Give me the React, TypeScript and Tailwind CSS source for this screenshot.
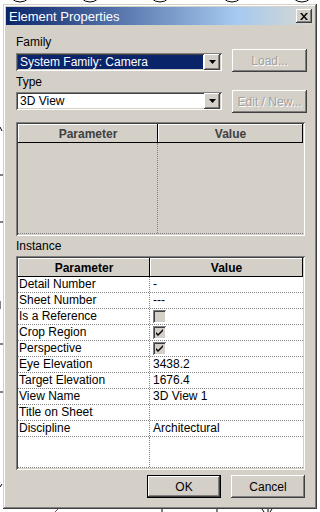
import React from 'react';

const sunken = 'shadow-[inset_1px_1px_#808080,inset_-1px_-1px_#ffffff,inset_2px_2px_#404040,inset_-2px_-2px_#d4d0c8]';
const raised = 'shadow-[inset_-1px_-1px_#404040,inset_1px_1px_#ffffff,inset_-2px_-2px_#808080]';

function DropArrow() {
  return (
    <div className={`w-[16px] h-[16px] bg-[#d4d0c8] flex items-center justify-center ${raised}`}>
      <svg width="7" height="4" viewBox="0 0 7 4">
        <path d="M0 0h7L3.5 4z" fill="#000" />
      </svg>
    </div>
  );
}

function Button({ label, disabled, def }: { label: string; disabled?: boolean; def?: boolean }) {
  return (
    <div className={`h-[23px] flex items-center justify-center bg-[#d4d0c8] text-[12px] ${def ? 'border border-black' : ''} ${raised}`}>
      <span className={disabled ? 'text-[#a0a0a0] [text-shadow:1px_1px_#ffffff]' : 'text-black'}>{label}</span>
    </div>
  );
}

function CheckBox({ checked }: { checked?: boolean }) {
  return (
    <div className={`w-[13px] h-[13px] bg-[#d4d0c8] flex items-center justify-center ${sunken}`}>
      {checked && (
        <svg width="9" height="9" viewBox="0 0 9 9">
          <path d="M1 4l2 2 5-5v2l-5 5-2-2z" fill="#000" />
        </svg>
      )}
    </div>
  );
}

const rows: { name: string; value: React.ReactNode }[] = [
  { name: 'Detail Number', value: '-' },
  { name: 'Sheet Number', value: '---' },
  { name: 'Is a Reference', value: <CheckBox /> },
  { name: 'Crop Region', value: <CheckBox checked /> },
  { name: 'Perspective', value: <CheckBox checked /> },
  { name: 'Eye Elevation', value: '3438.2' },
  { name: 'Target Elevation', value: '1676.4' },
  { name: 'View Name', value: '3D View 1' },
  { name: 'Title on Sheet', value: '' },
  { name: 'Discipline', value: 'Architectural' },
];

function HeaderCell({ label, w, dark }: { label: string; w: string; dark?: boolean }) {
  return (
    <div className={`${w} h-[19px] flex items-center justify-center bg-[#d4d0c8] font-bold text-[12px] ${dark ? 'text-[#404040]' : 'text-black'} shadow-[inset_-1px_-1px_#000000,inset_1px_1px_#ffffff]`}>
      {label}
    </div>
  );
}

export default function App() {
  return (
    <div className="relative w-[320px] h-[512px] bg-white overflow-hidden font-['Liberation_Sans',Arial,sans-serif]">
      <svg className="absolute inset-0" width="320" height="512" viewBox="0 0 320 512">
        <g fill="none" stroke="#000" strokeWidth="1">
          <circle cx="20" cy="-10" r="12" />
          <circle cx="90" cy="-10" r="12" />
          <circle cx="160" cy="-10" r="12" />
          <circle cx="232" cy="-10" r="12" />
          <circle cx="302" cy="-10" r="12" />
          <path d="M0 127l2 4M0 175h3M0 222h3M0 301v8M0 344h3M0 392h3M0 487l2-3M162 508v4M217 508v4M262 509l2 3M268 509v3M272 509l-2 3" />
        </g>
        <path d="M55 512l4-4" stroke="#c03050" />
      </svg>

      <div className={`absolute left-[3px] top-[4px] w-[314px] h-[505px] bg-[#d4d0c8] p-[3px] flex flex-col shadow-[inset_-1px_-1px_#404040,inset_1px_1px_#d4d0c8,inset_-2px_-2px_#808080,inset_2px_2px_#ffffff]`}>
        {/* title bar */}
        <div className="h-[18px] flex items-center pl-[3px] pr-[2px] bg-[linear-gradient(90deg,#0a246a,#a6caf0_75%,#d8d8d0)]">
          <span className="flex-1 text-white text-[13px] leading-none">Element Properties</span>
          <div className={`w-[16px] h-[14px] bg-[#d4d0c8] flex items-center justify-center ${raised}`}>
            <svg width="8" height="7" viewBox="0 0 8 7">
              <path d="M0 0h2l2 2.5L6 0h2L5 3.5 8 7H6L4 4.5 2 7H0l3-3.5z" fill="#000" />
            </svg>
          </div>
        </div>

        <div className="flex flex-col pl-[10px] pr-[7px] text-[12px] text-black">
          <div className="mt-[10px] h-[14px] leading-[14px]">Family</div>
          <div className="flex items-start">
            <div className={`mt-[4px] w-[207px] h-[18px] bg-white flex items-center p-[2px] ${sunken}`}>
              <div className="flex-1 h-[14px] bg-[#0a246a] text-white leading-[14px] pl-[2px] mr-[1px]">System Family: Camera</div>
              <DropArrow />
            </div>
            <div className="ml-[10px] w-[75px]">
              <Button label="Load..." disabled />
            </div>
          </div>

          <div className="mt-[3px] h-[14px] leading-[14px]">Type</div>
          <div className="flex items-start mt-[1px]">
            <div className={`mt-[2px] w-[207px] h-[18px] bg-white flex items-center p-[2px] ${sunken}`}>
              <div className="flex-1 h-[14px] leading-[14px] pl-[2px] mr-[1px]">3D View</div>
              <DropArrow />
            </div>
            <div className="ml-[10px] w-[75px]">
              <Button label="Edit / New..." disabled />
            </div>
          </div>

          {/* type parameters */}
          <div className={`mt-[9px] w-[289px] h-[114px] p-[2px] bg-[#d4d0c8] flex flex-col ${sunken}`}>
            <div className="flex">
              <HeaderCell label="Parameter" w="w-[140px]" dark />
              <HeaderCell label="Value" w="flex-1" dark />
            </div>
            <div className="flex-1 flex border-b border-dotted border-[#808080]">
              <div className="w-[140px] border-r border-dotted border-[#808080]" />
              <div className="flex-1" />
            </div>
          </div>

          <div className="mt-[3px] h-[14px] leading-[14px]">Instance</div>

          {/* instance parameters */}
          <div className={`mt-[3px] w-[289px] h-[214px] p-[2px] bg-white flex flex-col ${sunken}`}>
            <div className="flex">
              <HeaderCell label="Parameter" w="w-[132px]" />
              <HeaderCell label="Value" w="flex-1" />
            </div>
            {rows.map((r) => (
              <div key={r.name} className="flex h-[16px] border-b border-dotted border-[#808080]">
                <div className="w-[132px] pl-[1px] leading-[15px] border-r border-dotted border-[#808080]">{r.name}</div>
                <div className="flex-1 pl-[3px] leading-[15px] flex items-center">{r.value}</div>
              </div>
            ))}
            <div className="flex flex-1 border-b border-dotted border-[#808080]">
              <div className="w-[132px] border-r border-dotted border-[#808080]" />
              <div className="flex-1" />
            </div>
          </div>

          <div className="mt-[5px] flex justify-end gap-[10px] pr-[2px]">
            <div className="w-[74px]">
              <Button label="OK" def />
            </div>
            <div className="w-[74px]">
              <Button label="Cancel" />
            </div>
          </div>
        </div>
      </div>
    </div>
  );
}
